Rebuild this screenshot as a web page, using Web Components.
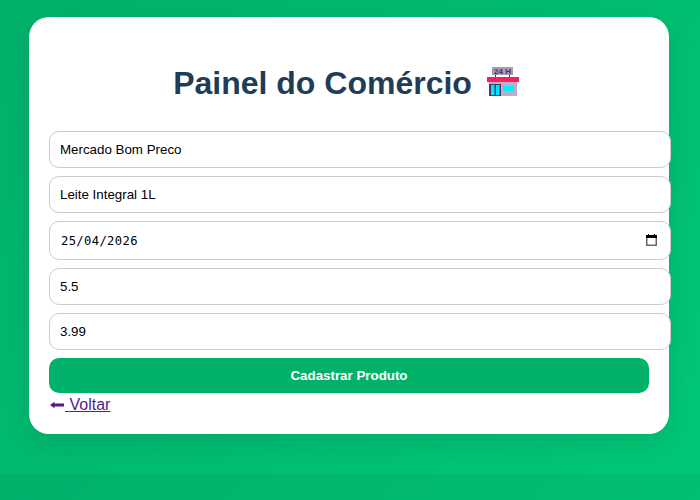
<!DOCTYPE html>
<html lang="pt-BR"><head><meta charset="utf-8"><title>Painel do Comércio</title>
<style>
html{background:linear-gradient(135deg,#00b16a,#00c878)}
body{margin:0;padding:17px 31px 40px 29px;font-family:"Liberation Sans",Arial,sans-serif}
</style></head><body>
<panel-card>
  <panel-title>Painel do Comércio</panel-title>
  <form-field value="Mercado Bom Preco"></form-field>
  <form-field value="Leite Integral 1L"></form-field>
  <date-field value="25/04/2026"></date-field>
  <form-field value="5.5"></form-field>
  <form-field value="3.99"></form-field>
  <primary-button>Cadastrar Produto</primary-button>
  <back-link>Voltar</back-link>
</panel-card>
<script>
function def(name,html,init){customElements.define(name,class extends HTMLElement{connectedCallback(){if(this.shadowRoot)return;const r=this.attachShadow({mode:'open'});r.innerHTML=html;init&&init(this,r)}})}
def('panel-card',`<style>:host{display:block;box-sizing:border-box;width:640px;height:417px;background:#fff;border-radius:20px;padding:20px;box-shadow:0 10px 30px rgba(0,0,0,.1)}</style><slot></slot>`);
def('panel-title',`<style>:host{display:flex;justify-content:center;align-items:center;gap:15px;margin:21px 0 28px;height:45px;padding-right:6px;font:bold 32px "Liberation Sans",Arial,sans-serif;color:#1f3d57}svg{display:block;flex:none;margin-top:1px}span{padding-top:6px}</style>
<span><slot></slot></span><svg width="32" height="29" viewBox="0 0 32 29" aria-hidden="true"><rect x="5" y="0" width="21" height="8" fill="#a99bb8"/><text x="15.5" y="7" text-anchor="middle" font-family="Liberation Sans" font-weight="bold" font-size="8" fill="#45305e">24 H</text><path d="M8.5 8v2M22.5 8v2" stroke="#45305e"/><rect x="2" y="15" width="28" height="14" fill="#bcaec4"/><rect x="0" y="10" width="32" height="5" fill="#fa1f63"/><rect x="2" y="17" width="12" height="12" fill="#4a3a6a"/><rect x="4" y="18" width="3.5" height="10" fill="#00e5ff"/><rect x="9" y="18" width="3.5" height="10" fill="#00e5ff"/><rect x="16" y="19" width="11" height="5" fill="#00f0ff"/></svg>`);
def('form-field',`<style>:host{display:block;margin-bottom:8px}input{display:block;box-sizing:content-box;width:100%;height:15px;padding:10px;border:1px solid #ccc;border-radius:10px;font:13.3333px "Liberation Sans",Arial,sans-serif;background:#fff;color:#000;margin:0;outline:0}</style><input type="text">`,(h,r)=>{r.querySelector('input').value=h.getAttribute('value')});
def('date-field',`<style>:host{display:block;margin-bottom:8px;position:relative}input{display:block;box-sizing:content-box;width:100%;height:17px;padding:10px 9px 10px 11px;margin:0;border:1px solid #ccc;border-radius:10px;font:12.2px "DejaVu Sans Mono",monospace;letter-spacing:.35px;background:#fff;color:#000;outline:0}svg{position:absolute;left:597px;top:13px}</style><input type="text"><svg width="11" height="12" viewBox="0 0 11 12" aria-hidden="true"><rect x=".75" y="3" width="9.5" height="8.250" fill="none" stroke="#666" stroke-width="1.5"/><rect x="0" y="1" width="11" height="3" fill="#000"/><path d="M2.500 0v2M8.500 0v2" stroke="#000"/></svg>`,(h,r)=>{r.querySelector('input').value=h.getAttribute('value')});
def('primary-button',`<style>:host{display:block}button{display:block;width:100%;height:35px;border:0;border-radius:10px;background:#00b16a;color:#fff;font:bold 13.3333px "Liberation Sans",Arial,sans-serif;padding:0}</style><button type="button"><slot></slot></button>`);
def('back-link',`<style>:host{display:block;margin-top:3px;font:16px/18px "Liberation Sans",Arial,sans-serif}a{color:#551a8b;text-decoration:underline}svg{vertical-align:0}</style><a href="#"><svg width="16" height="10" viewBox="0 0 16 10" aria-hidden="true"><path d="M1 5l4.500-3.200v1.600H15v3.200H5.500v1.600z" fill="#551a8b"/></svg> <slot></slot></a>`);
</script>
</body></html>
